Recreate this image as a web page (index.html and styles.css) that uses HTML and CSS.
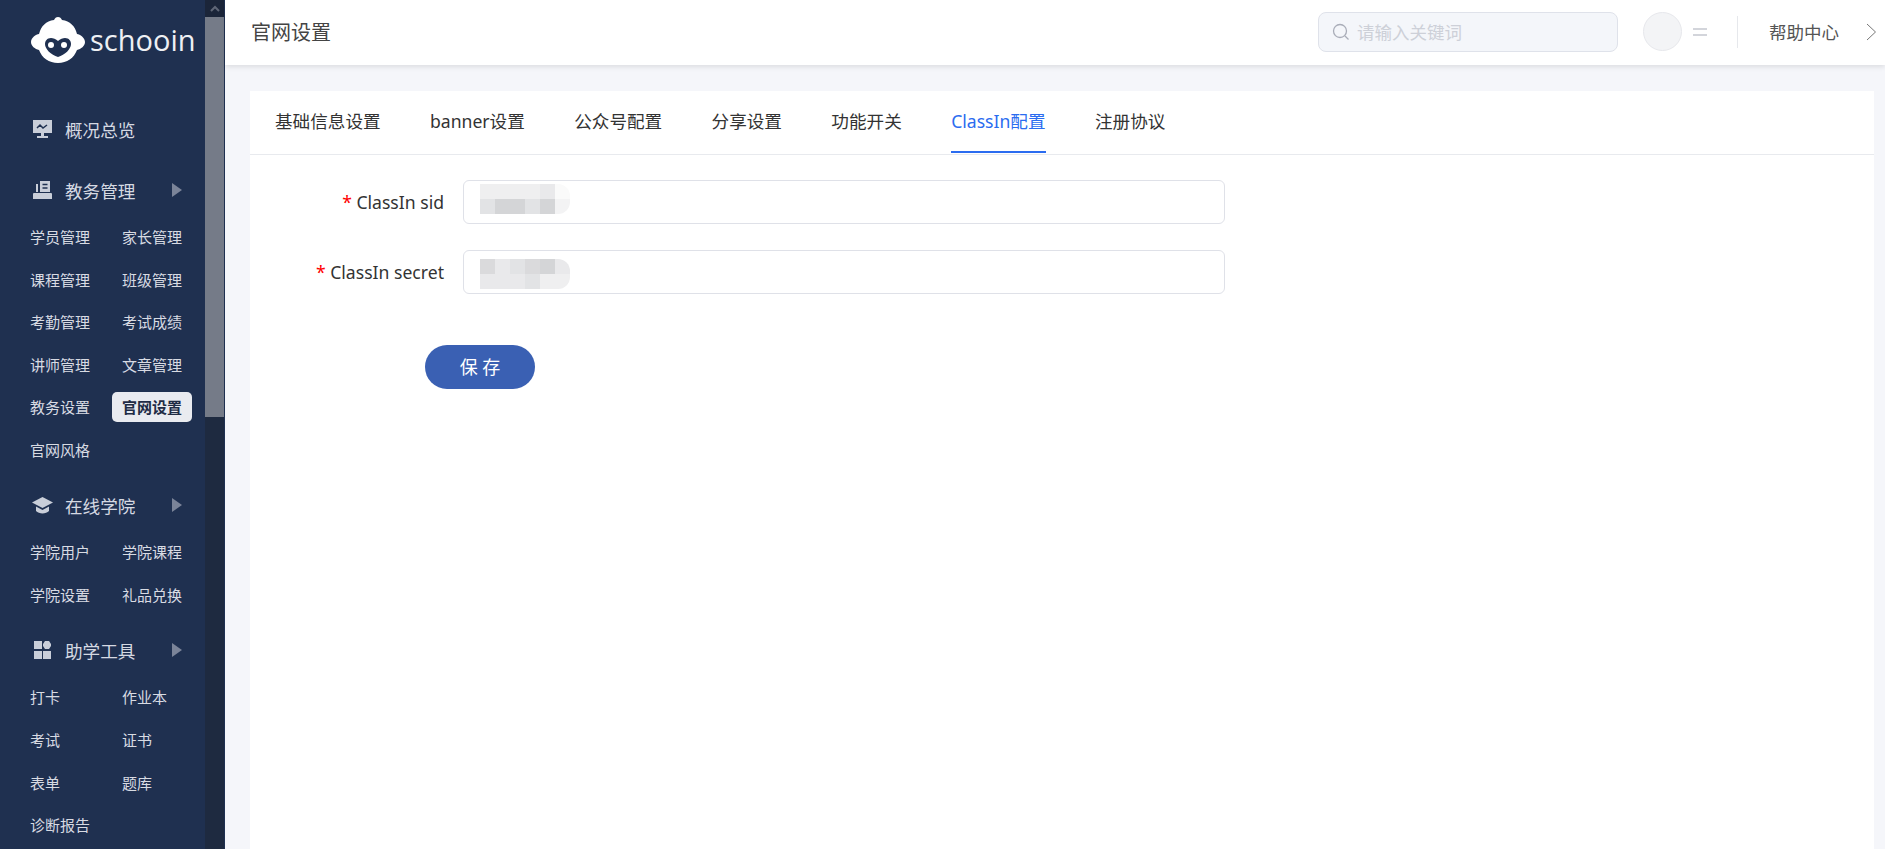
FILE: index.html
```html
<!DOCTYPE html>
<html lang="zh-CN">
<head>
	<meta charset="UTF-8">
	<title>官网设置</title>
	<link rel="stylesheet" href="styles.css">
</head>
<body>
<div class="layout">
	<aside class="sidebar">
		<nav class="nav">
			<div class="logo">
				<svg class="logo-mark" width="54" height="46" viewBox="0 0 54 46">
					<path fill="#fff" d="M27 0c2 0 3 1 4 3 8 1 13 6 15 14 3 0 8 4 8 8s-4 7-8 8c-3 8-10 13-19 13S11 41 8 33c-4-1-8-4-8-8s5-8 8-8C10 9 15 4 23 3c1-2 2-3 4-3z"/>
					<path fill="#1f3050" d="M27 24c2-2 5-3 7-3 4 0 6 3 6 6 0 5-6 11-13 13-7-2-13-8-13-13 0-3 2-6 6-6 2 0 5 1 7 3z"/>
					<circle fill="#fff" cx="20" cy="28" r="3"/>
					<circle fill="#fff" cx="33" cy="28" r="3"/>
				</svg>
				<span class="logo-text">schooin</span>
			</div>

			<div class="group group-first">
				<div class="head">
					<svg class="head-icon" width="21" height="20" viewBox="0 0 21 20">
						<path fill="#c9ced9" d="M1 1h19v13H1z"/>
						<path fill="#c9ced9" d="M9 14h3v3h4v2H5v-2h4z"/>
						<path fill="none" stroke="#1f3050" stroke-width="1.5" d="M5 9l3-3 3 3 4-3"/>
					</svg>
					<span>概况总览</span>
				</div>
			</div>

			<div class="group">
				<div class="head">
					<svg class="head-icon" width="21" height="20" viewBox="0 0 21 20">
						<path fill="#c9ced9" d="M2 13h17a1 1 0 0 1 1 1v5H1v-5a1 1 0 0 1 1-1z"/>
						<path fill="#c9ced9" d="M4 4h2v8H4zM8 1h10v11H8z"/>
						<path fill="none" stroke="#1f3050" stroke-width="1.4" d="M10.5 4.500h5M10.500 8h5"/>
					</svg>
					<span>教务管理</span>
					<i class="arrow"></i>
				</div>
				<div class="subs">
					<a class="sub">学员管理</a>
					<a class="sub">家长管理</a>
					<a class="sub">课程管理</a>
					<a class="sub">班级管理</a>
					<a class="sub">考勤管理</a>
					<a class="sub">考试成绩</a>
					<a class="sub">讲师管理</a>
					<a class="sub">文章管理</a>
					<a class="sub">教务设置</a>
					<a class="sub on">官网设置</a>
					<a class="sub">官网风格</a>
				</div>
			</div>

			<div class="group">
				<div class="head">
					<svg class="head-icon" width="21" height="20" viewBox="0 0 21 20">
						<path fill="#c9ced9" d="M10.500 2L21 7.500 10.500 13 0 7.500z"/>
						<path fill="#c9ced9" d="M4 11.500l6.500 3.500 6.500-3.500V16c-1.500 1.500-4 2.500-6.500 2.500S5.500 17.500 4 16z"/>
					</svg>
					<span>在线学院</span>
					<i class="arrow"></i>
				</div>
				<div class="subs">
					<a class="sub">学院用户</a>
					<a class="sub">学院课程</a>
					<a class="sub">学院设置</a>
					<a class="sub">礼品兑换</a>
				</div>
			</div>

			<div class="group">
				<div class="head">
					<svg class="head-icon" width="21" height="20" viewBox="0 0 21 20">
						<path fill="#c9ced9" d="M2 1h8v8H2zM2 11h8v8H2zM11 11h8v8h-8z"/>
						<path fill="#c9ced9" d="M13 1h4l2 3v2l-2 3h-4l-2-3V4z"/>
					</svg>
					<span>助学工具</span>
					<i class="arrow"></i>
				</div>
				<div class="subs">
					<a class="sub">打卡</a>
					<a class="sub">作业本</a>
					<a class="sub">考试</a>
					<a class="sub">证书</a>
					<a class="sub">表单</a>
					<a class="sub">题库</a>
					<a class="sub">诊断报告</a>
				</div>
			</div>
		</nav>
		<div class="scrollbar">
			<div class="scroll-up">
				<svg width="10" height="7" viewBox="0 0 10 7">
					<path d="M1 6l4-4 4 4" fill="none" stroke="#5f6676" stroke-width="2"/>
				</svg>
			</div>
			<div class="scroll-thumb"></div>
		</div>
	</aside>

	<main class="main">
		<header class="topbar">
			<h1 class="page-title">官网设置</h1>
			<div class="search">
				<svg width="18" height="18" viewBox="0 0 18 18">
					<circle cx="8" cy="8" r="6.500" fill="none" stroke="#a9adb8" stroke-width="1.300"/>
					<path d="M13 13l3.500 3.500" stroke="#a9adb8" stroke-width="1.300"/>
				</svg>
				<span>请输入关键词</span>
			</div>
			<div class="avatar"></div>
			<div class="name-mask"><i></i><i></i></div>
			<div class="divider"></div>
			<a class="help">帮助中心</a>
			<svg class="help-arrow" width="11" height="18" viewBox="0 0 11 18">
				<path d="M1 1l8.500 8L1 17" fill="none" stroke="#777" stroke-width="1"/>
			</svg>
		</header>

		<section class="content">
			<div class="card">
				<div class="tabs">
					<a class="tab">基础信息设置</a>
					<a class="tab">banner设置</a>
					<a class="tab">公众号配置</a>
					<a class="tab">分享设置</a>
					<a class="tab">功能开关</a>
					<a class="tab active">ClassIn配置</a>
					<a class="tab">注册协议</a>
				</div>
				<form class="form">
					<div class="row">
						<label class="label"><em>*</em> ClassIn sid</label>
						<div class="field">
							<div class="mosaic">
								<i class="m2"></i><i class="m2"></i><i class="m2"></i><i class="m2"></i><i class="m3"></i><i class="m0"></i>
								<i class="m4"></i><i class="m6"></i><i class="m6"></i><i class="m4"></i><i class="m6"></i><i class="m1"></i>
							</div>
						</div>
					</div>
					<div class="row">
						<label class="label"><em>*</em> ClassIn secret</label>
						<div class="field field-low">
							<div class="mosaic">
								<i class="m5"></i><i class="m3"></i><i class="m4"></i><i class="m5"></i><i class="m6"></i><i class="m3"></i>
								<i class="m3"></i><i class="m3"></i><i class="m3"></i><i class="m4"></i><i class="m2"></i><i class="m2"></i>
							</div>
						</div>
					</div>
					<button class="save" type="button">保 存</button>
				</form>
			</div>
		</section>
	</main>
</div>
</body>
</html>
```

FILE: styles.css
```css
*
{
    margin: 0;
    padding: 0;
    box-sizing: border-box;
    text-decoration: none;
}
html, body
{
    height: 100%;
    overflow: hidden;
}
body
{
    font-family: "Noto Sans", "Noto Sans CJK SC", sans-serif;
    color: #333;
    background: #f5f6fa;
}
.layout
{
    display: flex;
    height: 100%;
}

/* sidebar */
.sidebar
{
    display: flex;
    flex: none;
    width: 225px;
    height: 100%;
    overflow: hidden;
    background: #1f3050;
}
.nav
{
    flex: none;
    width: 205px;
}
.logo
{
    display: flex;
    align-items: center;
    height: 45px;
    margin: 17px 0 48px 31px;
}
.logo-mark
{
    flex: none;
}
.logo-text
{
    margin-left: 5px;
    font-family: "Open Sans", sans-serif;
    font-size: 29px;
    color: #eef0f4;
}
.group
{
    margin-bottom: 15px;
}
.group-first
{
    margin-bottom: 21px;
}
.head
{
    display: flex;
    align-items: center;
    height: 40px;
    padding: 0 23px 2px 32px;
    font-size: 17.600px;
    color: #d5d9e2;
}
.head-icon
{
    flex: none;
    margin-right: 12px;
}
.arrow
{
    width: 0;
    height: 0;
    margin-left: auto;
    border-top: 7px solid transparent;
    border-bottom: 7px solid transparent;
    border-left: 10px solid #7b8499;
}
.subs
{
    display: grid;
    grid-template-columns: 92px 92px;
    grid-auto-rows: 42.6px;
    align-items: center;
    justify-items: start;
    margin-top: 4.8px;
    padding-left: 20px;
}
.sub
{
    height: 30px;
    padding: 0 10px;
    font-size: 15px;
    line-height: 30px;
    color: #d8dbe3;
}
.sub.on
{
    border-radius: 5px;
    font-weight: bold;
    color: #1f2c45;
    background: #e9ebf0;
}
.scrollbar
{
    flex: none;
    width: 19px;
    background: #1e2a40;
}
.scroll-up
{
    display: flex;
    justify-content: center;
    align-items: center;
    height: 17px;
    background: #1b2539;
}
.scroll-thumb
{
    height: 400px;
    background: #757b88;
}

/* top bar */
.main
{
    display: flex;
    flex: 1;
    flex-direction: column;
    min-width: 0;
}
.topbar
{
    position: relative;
    z-index: 2;
    display: flex;
    flex: none;
    align-items: center;
    height: 65px;
    padding: 0 8px 2px 26px;
    background: #fff;
    box-shadow: 0 2px 5px rgba(0,0,0,.1);
}
.page-title
{
    font-size: 20px;
    font-weight: normal;
    color: #444;
}
.search
{
    display: flex;
    align-items: center;
    width: 300px;
    height: 40px;
    margin-left: auto;
    padding-left: 13px;
    border: 1px solid #dfe2ea;
    border-radius: 8px;
    font-size: 17.500px;
    color: #cdd0d8;
    background: #f4f6fa;
}
.search span
{
    margin-left: 7px;
}
.avatar
{
    width: 39px;
    height: 39px;
    margin-left: 25px;
    border: 1px solid #e7e8ec;
    border-radius: 50%;
    background: #f3f4f6;
}
.name-mask
{
    width: 14px;
    margin-left: 11px;
}
.name-mask i
{
    display: block;
    height: 2px;
    margin: 4px 0;
    background: #d3d5db;
}
.divider
{
    width: 1px;
    height: 32px;
    margin-left: 30px;
    background: #e6e8ec;
}
.help
{
    margin-left: 31px;
    font-size: 17.500px;
    color: #555;
}
.help-arrow
{
    margin-left: 27px;
}

/* card */
.content
{
    display: flex;
    flex: 1;
    min-height: 0;
    padding: 26px 11px 0 25px;
}
.card
{
    flex: 1;
    background: #fff;
}
.tabs
{
    display: flex;
    gap: 49.400px;
    height: 64px;
    padding-left: 25px;
    border-bottom: 1px solid #e8eaee;
}
.tab
{
    height: 62px;
    border-bottom: 2px solid transparent;
    font-size: 17.600px;
    line-height: 61px;
    color: #333;
}
.tab.active
{
    color: #2b6cf0;
    border-bottom-color: #2b6cf0;
}
.form
{
    padding-top: 25px;
}
.row
{
    display: flex;
    align-items: center;
    gap: 19px;
    margin-bottom: 26px;
}
.label
{
    width: 194px;
    font-size: 17.600px;
    text-align: right;
    color: #333;
}
.label em
{
    font-style: normal;
    color: #f00;
}
.field
{
    width: 762px;
    height: 44px;
    padding: 3px 0 0 16px;
    border: 1px solid #dfe1e8;
    border-radius: 6px;
    background: #fff;
}
.field-low
{
    padding-top: 8px;
}
.mosaic
{
    display: grid;
    grid-template-columns: repeat(6, 15px);
    grid-auto-rows: 15px;
    width: 90px;
    overflow: hidden;
    border-radius: 0 12px 12px 0;
}
.m0 { background: #fafafa; }
.m1 { background: #f3f3f4; }
.m2 { background: #efeff0; }
.m3 { background: #e9e9eb; }
.m4 { background: #e2e3e5; }
.m5 { background: #dadadc; }
.m6 { background: #d4d5d7; }
.save
{
    display: block;
    width: 110px;
    height: 44px;
    margin: 51px 0 0 175px;
    padding-bottom: 3px;
    border: 0;
    border-radius: 22px;
    font-family: inherit;
    font-size: 18px;
    color: #fff;
    background: #3a60b3;
}
```
